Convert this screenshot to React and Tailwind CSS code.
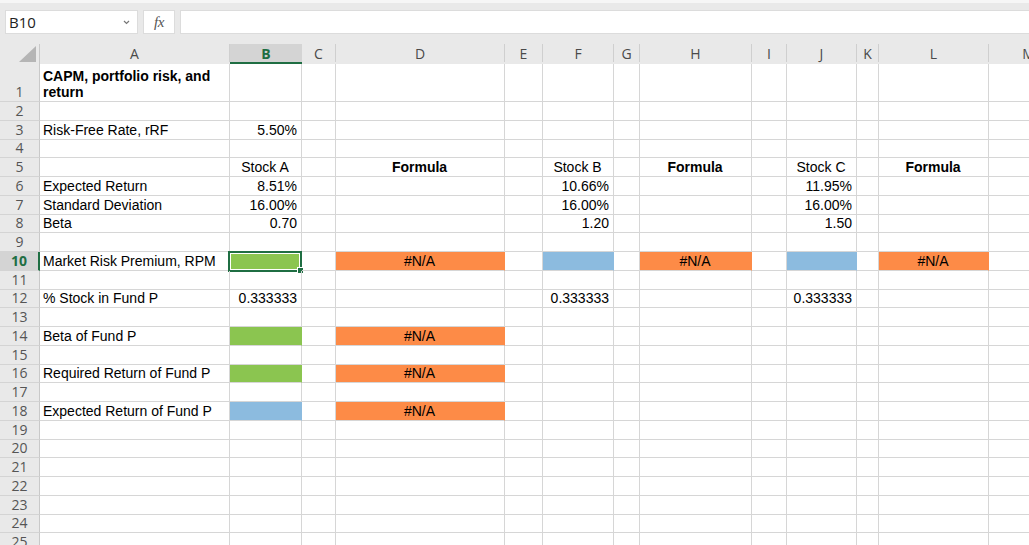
import React from 'react';

const cols = [
  { k: 'A', w: 'w-[190px]' },
  { k: 'B', w: 'w-[72px]' },
  { k: 'C', w: 'w-[34px]' },
  { k: 'D', w: 'w-[169px]' },
  { k: 'E', w: 'w-[38px]' },
  { k: 'F', w: 'w-[71px]' },
  { k: 'G', w: 'w-[26px]' },
  { k: 'H', w: 'w-[112px]' },
  { k: 'I', w: 'w-[35px]' },
  { k: 'J', w: 'w-[70px]' },
  { k: 'K', w: 'w-[22px]' },
  { k: 'L', w: 'w-[110px]' },
  { k: 'M', w: 'w-[80px]' },
];

const GREEN = 'bg-[#8bc550]';
const BLUE = 'bg-[#8cbbdf]';
const ORANGE = 'bg-[#fd8b47]';

const L = t => ({ t });
const R = t => ({ t, align: 'justify-end' });
const C = t => ({ t, align: 'justify-center' });
const B = t => ({ t, align: 'justify-center', bold: true });
const na = { t: '#N/A', align: 'justify-center', fill: ORANGE };

const data = {
  1: { A: { t: 'CAPM, portfolio risk, and return', bold: true, wrap: true } },
  3: { A: L('Risk-Free Rate, rRF'), B: R('5.50%') },
  5: { B: C('Stock A'), D: B('Formula'), F: C('Stock B'), H: B('Formula'), J: C('Stock C'), L: B('Formula') },
  6: { A: L('Expected Return'), B: R('8.51%'), F: R('10.66%'), J: R('11.95%') },
  7: { A: L('Standard Deviation'), B: R('16.00%'), F: R('16.00%'), J: R('16.00%') },
  8: { A: L('Beta'), B: R('0.70'), F: R('1.20'), J: R('1.50') },
  10: {
    A: L('Market Risk Premium, RPM'),
    B: { fill: GREEN, selected: true },
    D: na,
    F: { fill: BLUE },
    H: na,
    J: { fill: BLUE },
    L: na,
  },
  12: { A: L('% Stock in Fund P'), B: R('0.333333'), F: R('0.333333'), J: R('0.333333') },
  14: { A: L('Beta of Fund P'), B: { fill: GREEN }, D: na },
  16: { A: L('Required Return of Fund P'), B: { fill: GREEN }, D: na },
  18: { A: L('Expected Return of Fund P'), B: { fill: BLUE }, D: na },
};

const rows = Array.from({ length: 25 }, (_, i) => i + 1);

function Cell({ col, cell }) {
  const c = cell || {};
  return (
    <div
      className={`${col.w} relative h-full shrink-0 flex items-end border-b border-r border-[#d6d6d6] pl-[3px] pr-[4px] text-[14px] text-black ${c.align || ''} ${c.fill ? `${c.fill} border-r-transparent` : ''}`}
    >
      {c.t && (
        <span className={`${c.wrap ? 'whitespace-normal' : 'whitespace-nowrap'} ${c.bold ? 'font-bold' : ''} leading-[16px] pb-[1px]`}>
          {c.t}
        </span>
      )}
      {c.selected && (
        <div className="absolute -left-[2px] -top-[1px] -right-[1px] -bottom-[2px] border-2 border-[#1f6e43] shadow-[inset_0_0_0_1px_#ffffff]">
          <div className="absolute -right-[4px] -bottom-[4px] w-[7px] h-[7px] bg-[#1f6e43] border border-white" />
        </div>
      )}
    </div>
  );
}

export default function App() {
  return (
    <div className="w-[1029px] h-[545px] overflow-hidden bg-white font-['Liberation_Sans',Arial,sans-serif]">
      {/* formula bar */}
      <div className="h-[3px] bg-[#f6f6f6]" />
      <div className="h-[41px] bg-[#e9e9e9] flex items-start pt-[7px] pl-[5px] gap-[5px]">
        <div className="w-[133px] h-[24px] bg-white border border-[#dcdcdc] flex items-center justify-between pl-[3px] pr-[7px]">
          <span className="font-['Open_Sans',sans-serif] text-[15px] text-[#222]">B10</span>
          <svg width="7" height="5" viewBox="0 0 7 5">
            <polyline points="1,1 3.5,3.5 6,1" fill="none" stroke="#777" strokeWidth="1.2" />
          </svg>
        </div>
        <div className="w-[32px] h-[24px] bg-white border border-[#dcdcdc] flex items-center justify-center">
          <span className="font-['Liberation_Serif',serif] italic text-[15px] text-[#555] tracking-[-0.5px]">fx</span>
        </div>
        <div className="flex-1 h-[24px] bg-white border-y border-l border-[#dcdcdc]" />
      </div>

      {/* column headers */}
      <div className="flex h-[20px] bg-[#e9e9e9] font-['Open_Sans',sans-serif] text-[14px] text-[#4a4a4a]">
        <div className="w-[40px] h-full shrink-0 flex items-end justify-end pr-[3px] pb-[2px] border-r border-[#c9c9c9]">
          <svg width="17" height="16" viewBox="0 0 17 16">
            <polygon points="17,0 17,16 0,16" fill="#b5b5b5" />
          </svg>
        </div>
        {cols.map(col => {
          const sel = col.k === 'B';
          return (
            <div
              key={col.k}
              className={`${col.w} h-full shrink-0 flex flex-col ${sel ? 'bg-[#d4d4d4] border-b-2 border-[#1f6e43]' : ''}`}
            >
              <div className={`h-[18px] flex items-center justify-center ${sel ? '' : 'border-r border-[#cfcfcf]'}`}>
                <span className={sel ? 'font-bold text-[#1f6e43]' : ''}>{col.k}</span>
              </div>
            </div>
          );
        })}
      </div>

      {/* grid */}
      <div className="flex flex-col">
        {rows.map(r => {
          const sel = r === 10;
          return (
            <div key={r} className={`flex shrink-0 ${r === 1 ? 'h-[38px]' : 'h-[18.75px]'}`}>
              <div
                className={`w-[40px] h-full shrink-0 flex items-end justify-center pb-[1px] border-b border-[#d4d4d4] font-['Open_Sans',sans-serif] text-[14px] leading-[17px] ${sel ? 'bg-[#d4d4d4] border-r-2 border-r-[#1f6e43] font-bold text-[#1f6e43]' : 'bg-[#e9e9e9] border-r border-r-[#c9c9c9] text-[#555]'}`}
              >
                {r}
              </div>
              {cols.map(col => (
                <Cell key={col.k} col={col} cell={data[r] && data[r][col.k]} />
              ))}
            </div>
          );
        })}
      </div>
    </div>
  );
}
